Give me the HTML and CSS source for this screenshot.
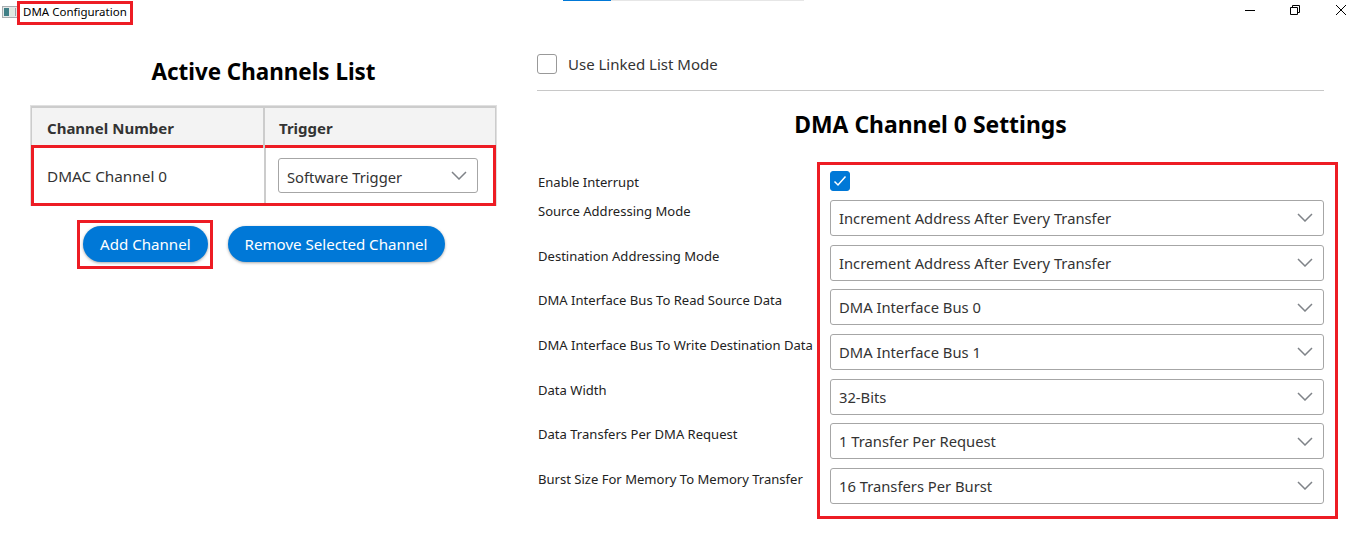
FILE: index.html
```html
<!DOCTYPE html>
<html lang="en">
<head>
  <meta charset="UTF-8">
  <meta name="viewport" content="width=device-width, initial-scale=1.0">
  <title>DMA Configuration</title>
  <link rel="stylesheet" href="styles.css">
</head>
<body>
  <header class="titlebar">
    <svg class="app-icon" width="16" height="12" viewBox="0 0 16 12">
      <rect x="0.5" y="0.5" width="15" height="11" fill="#e4e8e8" stroke="#a9adb0"/>
      <rect x="2" y="2" width="5" height="8" fill="#3f7f86"/>
      <rect x="8" y="2" width="4" height="8" fill="#dfe9e2"/>
      <rect x="13" y="2" width="1" height="8" fill="#9aa5a8"/>
    </svg>
    <span class="window-title">DMA Configuration</span>
    <div class="tab-strip"><span class="tab-active"></span></div>
    <div class="window-buttons">
      <svg width="10" height="10" viewBox="0 0 10 10"><path d="M0 5.5H10" stroke="#000" fill="none"/></svg>
      <svg width="10" height="10" viewBox="0 0 10 10"><path d="M0.5 2.5H7.5V9.5H0.5ZM2.5 2.5V0.5H9.5V7.5H7.5" stroke="#000" fill="none"/></svg>
      <svg width="10" height="10" viewBox="0 0 10 10"><path d="M0 0L10 10M10 0L0 10" stroke="#000" stroke-width="1" fill="none"/></svg>
    </div>
  </header>

  <main class="page">
    <section class="channels">
      <h2 class="channels-title">Active Channels List</h2>
      <div class="table">
        <div class="table-head">
          <div class="cell-name">Channel Number</div>
          <div class="cell-trigger">Trigger</div>
        </div>
        <div class="table-row">
          <div class="cell-name">DMAC Channel 0</div>
          <div class="cell-trigger">
            <div class="select select-small">
              <span>Software Trigger</span>
              <svg class="chevron" width="16" height="9" viewBox="0 0 16 9"><path d="M1 1L8 8L15 1" fill="none" stroke="#7f8388" stroke-width="1.5"/></svg>
            </div>
          </div>
        </div>
      </div>
      <div class="actions">
        <span class="add-mark"><button class="btn">Add Channel</button></span>
        <button class="btn btn-remove">Remove Selected Channel</button>
      </div>
    </section>

    <section class="settings">
      <label class="linked">
        <span class="checkbox"></span>
        Use Linked List Mode
      </label>
      <h2 class="settings-title">DMA Channel 0 Settings</h2>
      <div class="settings-body">
        <div class="labels">
          <div class="label label-first">Enable Interrupt</div>
          <div class="label">Source Addressing Mode</div>
          <div class="label">Destination Addressing Mode</div>
          <div class="label">DMA Interface Bus To Read Source Data</div>
          <div class="label">DMA Interface Bus To Write Destination Data</div>
          <div class="label">Data Width</div>
          <div class="label">Data Transfers Per DMA Request</div>
          <div class="label">Burst Size For Memory To Memory Transfer</div>
        </div>
        <div class="fields">
          <span class="checkbox checkbox-on">
            <svg width="14" height="12" viewBox="0 0 14 12"><path d="M1.5 6.5L5 10L12.5 1.5" fill="none" stroke="#fff" stroke-width="1.5"/></svg>
          </span>
          <div class="select"><span>Increment Address After Every Transfer</span><svg class="chevron" width="16" height="9" viewBox="0 0 16 9"><path d="M1 1L8 8L15 1" fill="none" stroke="#7f8388" stroke-width="1.5"/></svg></div>
          <div class="select"><span>Increment Address After Every Transfer</span><svg class="chevron" width="16" height="9" viewBox="0 0 16 9"><path d="M1 1L8 8L15 1" fill="none" stroke="#7f8388" stroke-width="1.5"/></svg></div>
          <div class="select"><span>DMA Interface Bus 0</span><svg class="chevron" width="16" height="9" viewBox="0 0 16 9"><path d="M1 1L8 8L15 1" fill="none" stroke="#7f8388" stroke-width="1.5"/></svg></div>
          <div class="select"><span>DMA Interface Bus 1</span><svg class="chevron" width="16" height="9" viewBox="0 0 16 9"><path d="M1 1L8 8L15 1" fill="none" stroke="#7f8388" stroke-width="1.5"/></svg></div>
          <div class="select"><span>32-Bits</span><svg class="chevron" width="16" height="9" viewBox="0 0 16 9"><path d="M1 1L8 8L15 1" fill="none" stroke="#7f8388" stroke-width="1.5"/></svg></div>
          <div class="select"><span>1 Transfer Per Request</span><svg class="chevron" width="16" height="9" viewBox="0 0 16 9"><path d="M1 1L8 8L15 1" fill="none" stroke="#7f8388" stroke-width="1.5"/></svg></div>
          <div class="select"><span>16 Transfers Per Burst</span><svg class="chevron" width="16" height="9" viewBox="0 0 16 9"><path d="M1 1L8 8L15 1" fill="none" stroke="#7f8388" stroke-width="1.5"/></svg></div>
        </div>
      </div>
    </section>
  </main>
</body>
</html>
```

FILE: styles.css
```css
html, body {
  margin: 0;
  padding: 0;
  height: 544px;
  overflow: hidden;
}
body {
  font-family: "Noto Sans", "Open Sans", sans-serif;
  font-size: 14.75px;
  color: #333;
  background: #fff;
}

/* window title bar */
.titlebar {
  position: relative;
  display: flex;
  align-items: flex-start;
  height: 26px;
  padding: 1px 0 0 2px;
  box-sizing: border-box;
}
.app-icon {
  margin-top: 5px;
  flex: none;
}
.window-title {
  margin-left: -1px;
  width: 116px;
  height: 24px;
  line-height: 16px;
  box-sizing: border-box;
  border: 3px solid #ed1c24;
  padding-left: 3px;
  font-size: 11.5px;
  color: #000;
  white-space: nowrap;
}
.tab-strip {
  position: absolute;
  left: 563px;
  top: 0;
  width: 241px;
  height: 1px;
  background: #e6e6e6;
}
.tab-active {
  display: block;
  width: 48px;
  height: 1px;
  background: #0078d7;
}
.window-buttons {
  margin-left: auto;
  display: flex;
  gap: 35px;
  padding: 4px 20px 0 0;
}
.window-buttons svg:last-child {
  margin-left: 1px;
}

.page {
  display: flex;
  align-items: flex-start;
}

/* left column */
.channels {
  width: 467px;
  margin-left: 30px;
  flex: none;
}
.channels-title {
  margin: 30px 0 17px;
  height: 32px;
  line-height: 32px;
  font-size: 22.4px;
  font-weight: 700;
  color: #000;
  text-align: center;
}
.table {
  border: 1px solid #e0e0e0;
  border-bottom: none;
}
.table-head {
  display: grid;
  grid-template-columns: 231px 1fr;
  height: 37px;
  background: #f3f3f3;
  border-top: 2px solid #ccc;
  border-left: 1px solid #ccc;
  border-right: 1px solid #ccc;
  font-weight: 700;
  font-size: 15px;
}
.table-head > div {
  height: 100%;
  line-height: 40px;
}
.table-row {
  display: grid;
  grid-template-columns: 230px 1fr;
  height: 61px;
  box-sizing: border-box;
  border: 3px solid #ed1c24;
  font-size: 15.3px;
}
.table-row > div {
  height: 100%;
  display: flex;
  align-items: center;
}
.cell-name {
  padding-left: 15px;
  box-sizing: border-box;
}
.table-row .cell-name {
  padding: 0 0 0 13px;
}
.cell-trigger {
  border-left: 2px solid #ccc;
  padding-left: 14px;
  box-sizing: border-box;
}
.table-row .cell-trigger {
  padding-left: 12px;
}
.actions {
  display: flex;
  align-items: flex-start;
  margin: 14px 0 0 47px;
}
.add-mark {
  display: block;
  border: 3px solid #ed1c24;
  padding: 3px 2px 4px 3px;
}
.btn {
  display: block;
  height: 36px;
  padding: 0 17px;
  border: none;
  border-radius: 18px;
  background: #0078d7;
  color: #fff;
  font-family: inherit;
  font-size: 15.1px;
  box-shadow: 0 1px 3px rgba(0, 0, 0, 0.35);
  white-space: nowrap;
}
.btn-remove {
  margin: 6px 0 0 15px;
}

/* right column */
.settings {
  margin-left: 40px;
  width: 787px;
  flex: none;
}
.linked {
  display: flex;
  align-items: center;
  gap: 11px;
  height: 65px;
  padding-top: 12px;
  box-sizing: border-box;
  border-bottom: 1px solid #c8c8c8;
  margin-bottom: 16px;
  font-size: 15px;
}
.checkbox {
  display: flex;
  align-items: center;
  justify-content: center;
  width: 20px;
  height: 20px;
  box-sizing: border-box;
  border: 1px solid #999;
  border-radius: 3px;
  background: #fff;
}
.checkbox-on {
  background: #0078d7;
  border-color: #0078d7;
}
.settings-title {
  margin: 0 0 20px;
  height: 35px;
  line-height: 35px;
  font-size: 22.9px;
  font-weight: 700;
  color: #000;
  text-align: center;
}
.settings-body {
  display: flex;
  align-items: flex-start;
}
.labels {
  width: 280px;
  flex: none;
  padding: 11px 0 0 1px;
  box-sizing: border-box;
}
.label {
  height: 18px;
  line-height: 18px;
  margin-bottom: 26.67px;
  font-size: 13.05px;
  color: #222;
  white-space: nowrap;
}
.label-first {
  margin-bottom: 11px;
}
.fields {
  width: 521px;
  flex: none;
  box-sizing: border-box;
  border: 3px solid #ed1c24;
  padding: 6px 11px 12px 10px;
  display: flex;
  flex-direction: column;
  gap: 8.67px;
}
.fields .checkbox {
  margin-bottom: 0.33px;
}
.select {
  display: flex;
  align-items: center;
  justify-content: space-between;
  height: 36px;
  padding: 0 10px 0 8px;
  box-sizing: border-box;
  border: 1px solid #a6a6a6;
  border-radius: 3px;
  background: #fff;
  font-size: 14.75px;
}
.select-small {
  width: 200px;
  height: 35px;
}
.select-small span {
  padding-top: 3px;
}
.chevron {
  flex: none;
}
```
